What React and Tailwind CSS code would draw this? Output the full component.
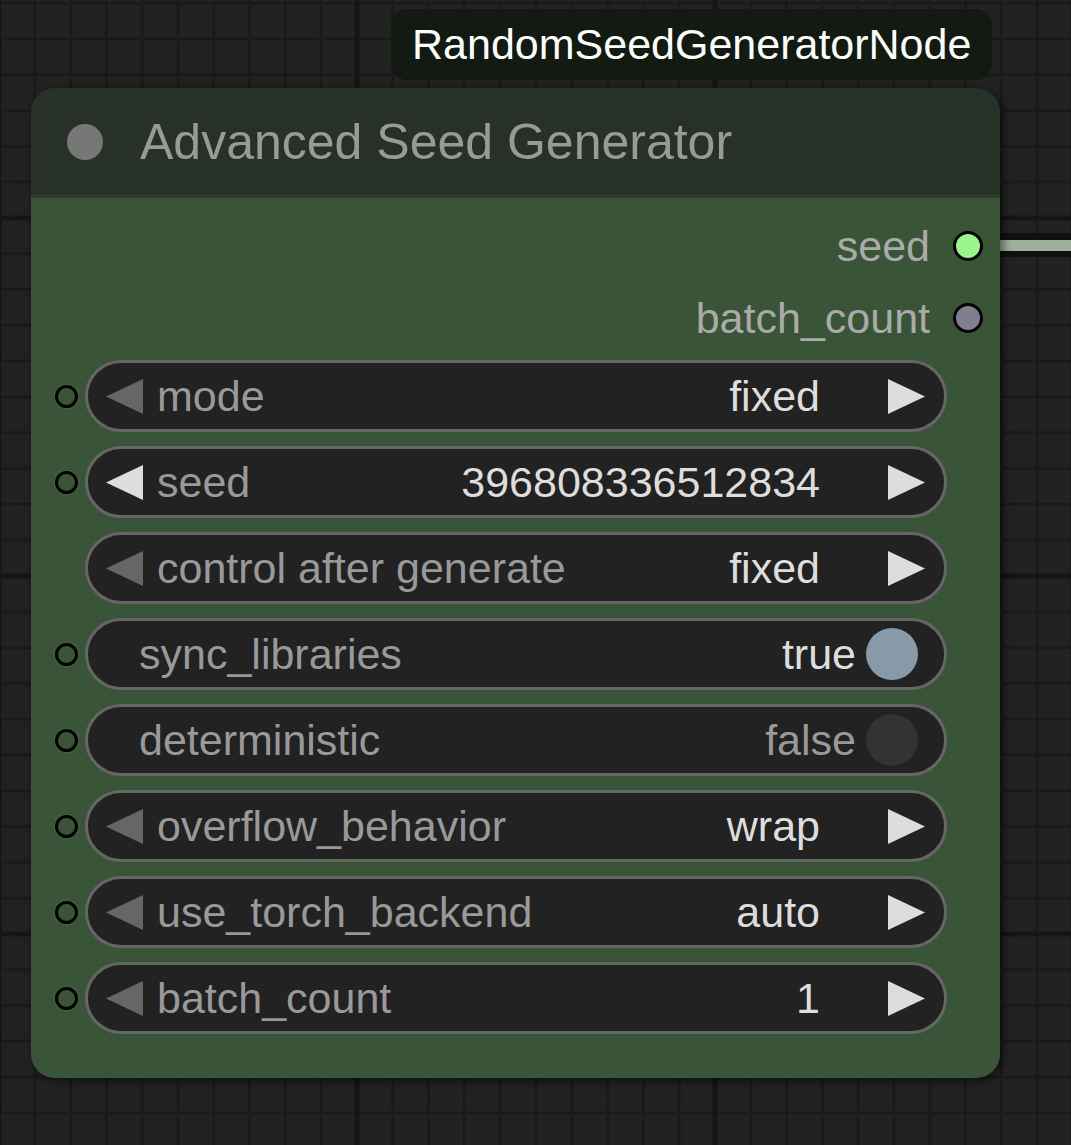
const font = { fontFamily: '"Liberation Sans", Arial, sans-serif' };

const widgets = [
  { kind: 'combo', label: 'mode', value: 'fixed', slot: true, leftActive: false },
  { kind: 'combo', label: 'seed', value: '396808336512834', slot: true, leftActive: true },
  { kind: 'combo', label: 'control after generate', value: 'fixed', slot: false, leftActive: false },
  { kind: 'toggle', label: 'sync_libraries', value: true, slot: true },
  { kind: 'toggle', label: 'deterministic', value: false, slot: true },
  { kind: 'combo', label: 'overflow_behavior', value: 'wrap', slot: true, leftActive: false },
  { kind: 'combo', label: 'use_torch_backend', value: 'auto', slot: true, leftActive: false },
  { kind: 'combo', label: 'batch_count', value: '1', slot: true, leftActive: false },
];

function Arrow({ dir, active }) {
  const fill = active ? '#dddddd' : '#666666';
  return (
    <svg width="37" height="35" viewBox="0 0 37 35" className="shrink-0">
      {dir === 'left' ? (
        <polygon points="37,0 37,35 0,17.5" fill={fill} />
      ) : (
        <polygon points="0,0 0,35 37,17.5" fill={fill} />
      )}
    </svg>
  );
}

function InputSlot({ show }) {
  return (
    <div className="flex w-[24px] shrink-0 items-center justify-center">
      {show && (
        <div className="h-[23px] w-[23px] rounded-full border-[3px] border-black shadow-[0_0_3px_rgba(90,150,80,0.6)]" />
      )}
    </div>
  );
}

function ComboWidget({ w }) {
  return (
    <div className="flex h-full flex-1 items-center rounded-full border-[3px] border-[#666] bg-[#222] pl-[18px] pr-[19px]">
      <Arrow dir="left" active={w.leftActive} />
      <span className="ml-[14px] text-[43px] leading-none text-[#999]">{w.label}</span>
      <span className="ml-auto text-[43px] leading-none text-[#ddd]">{w.value}</span>
      <div className="ml-[68px]">
        <Arrow dir="right" active />
      </div>
    </div>
  );
}

function ToggleWidget({ w }) {
  return (
    <div className="flex h-full flex-1 items-center rounded-full border-[3px] border-[#666] bg-[#222] pl-[51px] pr-[26px]">
      <span className="text-[43px] leading-none text-[#999]">{w.label}</span>
      <span className={`ml-auto text-[43px] leading-none ${w.value ? 'text-[#ddd]' : 'text-[#999]'}`}>
        {w.value ? 'true' : 'false'}
      </span>
      <div
        className={`ml-[10px] h-[52px] w-[52px] rounded-full ${w.value ? 'bg-[#8899aa]' : 'bg-[#333]'}`}
      />
    </div>
  );
}

function OutputRow({ label, color }) {
  return (
    <div className="flex h-[72px] items-center justify-end gap-[23px] pr-[17px]">
      <span className="text-[43px] leading-none text-[#aaa]">{label}</span>
      <div className={`h-[30px] w-[30px] rounded-full border-[3px] border-black ${color}`} />
    </div>
  );
}

export default function App() {
  return (
    <div
      style={font}
      className="relative h-[1145px] w-[1071px] overflow-hidden bg-[#222222] [background-image:linear-gradient(to_right,#151515_0_5px,transparent_5px),linear-gradient(to_bottom,#151515_0_5px,transparent_5px),linear-gradient(to_right,#1a1a1a_0_3px,transparent_3px),linear-gradient(to_bottom,#1a1a1a_0_3px,transparent_3px)] [background-size:358px_358px,358px_358px,35.8px_35.8px,35.8px_35.8px] [background-position:354.5px_0,0_215.5px,-2.5px_0,0_1.7px]"
    >
      {/* link leaving the seed output */}
      <div className="absolute left-[1000px] top-[233px] flex h-[24px] w-[71px] items-center bg-[#111]">
        <div className="h-[11px] w-full bg-[#9eb09c]" />
      </div>

      {/* node id badge */}
      <div className="absolute left-[391px] top-[9px] flex h-[71px] items-center rounded-[16px] bg-[#121a12] px-[21px]">
        <span className="text-[43px] leading-none text-white">RandomSeedGeneratorNode</span>
      </div>

      {/* node */}
      <div className="absolute left-[31px] top-[88px] flex w-[969px] flex-col overflow-hidden rounded-[24px] shadow-[3px_3px_10px_rgba(0,0,0,0.55)]">
        <div className="flex h-[110px] items-center border-b-[3px] border-[#2e3b2c] bg-[#283127] pl-[36px]">
          <div className="h-[36px] w-[36px] rounded-full bg-[#777]" />
          <span className="ml-[37px] text-[50px] leading-none text-[#999]">Advanced Seed Generator</span>
        </div>

        <div className="flex flex-col bg-[#3a5437] pb-[44px] pt-[12px]">
          <OutputRow label="seed" color="bg-[#9af58b]" />
          <OutputRow label="batch_count" color="bg-[#7f7f8f]" />

          <div className="mt-[6px] flex flex-col gap-[14px]">
            {widgets.map((w) => (
              <div key={w.label} className="flex h-[72px] items-center gap-[7px] pl-[23px] pr-[53px]">
                <InputSlot show={w.slot} />
                {w.kind === 'toggle' ? <ToggleWidget w={w} /> : <ComboWidget w={w} />}
              </div>
            ))}
          </div>
        </div>
      </div>
    </div>
  );
}
